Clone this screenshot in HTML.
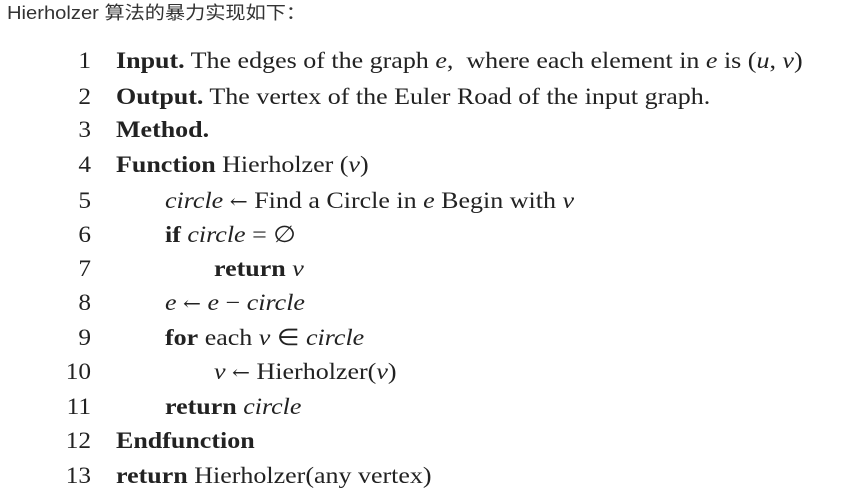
<!DOCTYPE html>
<html><head><meta charset="utf-8"><style>
body{margin:0;width:841px;height:498px;background:#fff;position:relative;overflow:hidden;color:#222}
.h{position:absolute;left:7px;top:-1px;font:18px "Liberation Sans","Noto Sans CJK SC",sans-serif;color:#333;transform:scaleX(1.12);transform-origin:left}
.l{position:absolute;font:23px "Liberation Serif",serif;white-space:nowrap;line-height:26px;transform:scaleX(1.13);transform-origin:left}
.n{position:absolute;width:25px;text-align:right;left:66px;font:23px "Liberation Serif",serif;line-height:26px;transform:scaleX(1.1);transform-origin:right}
b{font-weight:bold}
.a{font-family:"DejaVu Serif",serif;font-size:19px}
</style></head><body>
<div class="h">Hierholzer 算法的暴力实现如下：</div>
<div class="n" style="top:48px">1</div><div class="l" style="left:116px;top:48px"><b>Input.</b> The edges of the graph <i>e</i>, &nbsp;where each element in <i>e</i> is (<i>u</i>, <i>v</i>)</div>
<div class="n" style="top:84px">2</div><div class="l" style="left:116px;top:84px"><b>Output.</b> The vertex of the Euler Road of the input graph.</div>
<div class="n" style="top:117px">3</div><div class="l" style="left:116px;top:117px"><b>Method.</b></div>
<div class="n" style="top:152px">4</div><div class="l" style="left:116px;top:152px"><b>Function</b> Hierholzer (<i>v</i>)</div>
<div class="n" style="top:188px">5</div><div class="l" style="left:165px;top:188px"><i>circle</i> <span class="a">←</span> Find a Circle in <i>e</i> Begin with <i>v</i></div>
<div class="n" style="top:222px">6</div><div class="l" style="left:165px;top:222px"><b>if</b> <i>circle</i> = ∅</div>
<div class="n" style="top:256px">7</div><div class="l" style="left:214px;top:256px"><b>return</b> <i>v</i></div>
<div class="n" style="top:290px">8</div><div class="l" style="left:165px;top:290px"><i>e</i> <span class="a">←</span> <i>e</i> − <i>circle</i></div>
<div class="n" style="top:325px">9</div><div class="l" style="left:165px;top:325px"><b>for</b> each <i>v</i> ∈ <i>circle</i></div>
<div class="n" style="top:359px">10</div><div class="l" style="left:214px;top:359px"><i>v</i> <span class="a">←</span> Hierholzer(<i>v</i>)</div>
<div class="n" style="top:394px">11</div><div class="l" style="left:165px;top:394px"><b>return</b> <i>circle</i></div>
<div class="n" style="top:428px">12</div><div class="l" style="left:116px;top:428px"><b>Endfunction</b></div>
<div class="n" style="top:463px">13</div><div class="l" style="left:116px;top:463px"><b>return</b> Hierholzer(any vertex)</div>
</body></html>
